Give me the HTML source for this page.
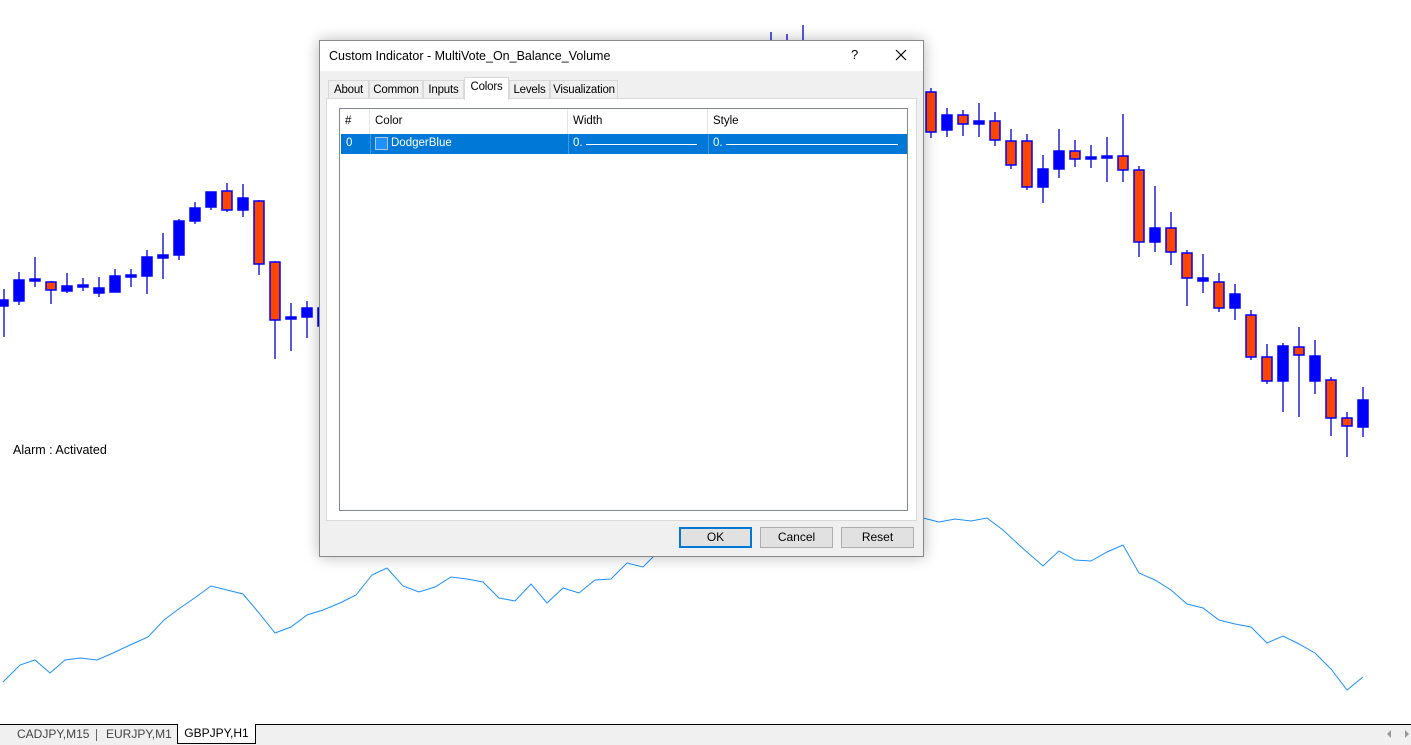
<!DOCTYPE html>
<html><head><meta charset="utf-8"><style>
*{margin:0;padding:0;box-sizing:border-box}
body{width:1411px;height:745px;overflow:hidden;background:#fff;font-family:"Liberation Sans",Arial,sans-serif;position:relative}
.abs{position:absolute}
#dlg{left:319px;top:40px;width:605px;height:517px;background:#f0f0f0;border:1px solid #888;box-shadow:0 0 14px rgba(0,0,0,.28)}
#title{position:absolute;left:0;top:0;width:603px;height:30px;background:#fff;font-size:12.5px;color:#000}
.tab{position:absolute;top:39px;height:19px;border:1px solid #d9d9d9;border-bottom:none;background:#f0f0f0;font-size:11.5px;line-height:18px;text-align:center;color:#000;white-space:nowrap;letter-spacing:-0.2px}
.tab.act{top:36px;height:23px;background:#fff;border-color:#d9d9d9;z-index:2}
#panel{position:absolute;left:6px;top:57px;width:591px;height:423px;background:#fff;border:1px solid #d9d9d9}
#list{position:absolute;left:12px;top:9px;width:569px;height:403px;border:1px solid #828790;background:#fff;font-size:11.5px}
.hd{position:absolute;top:0;height:25px;line-height:24px;border-right:1px solid #e5e5e5;padding-left:5px}
.btn{position:absolute;top:486px;height:21px;border:1px solid #adadad;background:#e1e1e1;font-size:12px;line-height:19px;text-align:center}
.bt{position:absolute;top:727px;font-size:12px;color:#444}
</style></head><body>
<svg class="abs" style="left:0;top:0" width="1411" height="745">
<g stroke="#0000cc" stroke-width="1.3">
<line x1="4" y1="289" x2="4" y2="337"/><line x1="19" y1="272" x2="19" y2="305"/><line x1="35" y1="257" x2="35" y2="287"/><line x1="51" y1="281" x2="51" y2="304"/><line x1="67" y1="273" x2="67" y2="293"/><line x1="83" y1="278" x2="83" y2="291"/><line x1="99" y1="277" x2="99" y2="297"/><line x1="115" y1="269" x2="115" y2="292"/><line x1="131" y1="269" x2="131" y2="287"/><line x1="147" y1="250" x2="147" y2="294"/><line x1="163" y1="233" x2="163" y2="279"/><line x1="179" y1="219" x2="179" y2="260"/><line x1="195" y1="202" x2="195" y2="224"/><line x1="211" y1="192" x2="211" y2="210"/><line x1="227" y1="183" x2="227" y2="212"/><line x1="243" y1="184" x2="243" y2="217"/><line x1="259" y1="200" x2="259" y2="275"/><line x1="275" y1="261" x2="275" y2="359"/><line x1="291" y1="303" x2="291" y2="351"/><line x1="307" y1="301" x2="307" y2="338"/><line x1="323" y1="300" x2="323" y2="340"/>
<line x1="771" y1="32" x2="771" y2="42"/><line x1="787" y1="34" x2="787" y2="42"/><line x1="803" y1="25" x2="803" y2="42"/>
<line x1="931" y1="88" x2="931" y2="138"/><line x1="947" y1="108" x2="947" y2="137"/><line x1="963" y1="110" x2="963" y2="136"/><line x1="979" y1="103" x2="979" y2="137"/><line x1="995" y1="112" x2="995" y2="146"/><line x1="1011" y1="129" x2="1011" y2="169"/><line x1="1027" y1="134" x2="1027" y2="190"/><line x1="1043" y1="155" x2="1043" y2="203"/><line x1="1059" y1="129" x2="1059" y2="178"/><line x1="1075" y1="140" x2="1075" y2="167"/><line x1="1091" y1="145" x2="1091" y2="168"/><line x1="1107" y1="137" x2="1107" y2="182"/><line x1="1123" y1="114" x2="1123" y2="182"/><line x1="1139" y1="166" x2="1139" y2="257"/><line x1="1155" y1="186" x2="1155" y2="252"/><line x1="1171" y1="212" x2="1171" y2="265"/><line x1="1187" y1="250" x2="1187" y2="306"/><line x1="1203" y1="254" x2="1203" y2="293"/><line x1="1219" y1="273" x2="1219" y2="312"/><line x1="1235" y1="284" x2="1235" y2="320"/><line x1="1251" y1="310" x2="1251" y2="360"/><line x1="1267" y1="344" x2="1267" y2="384"/><line x1="1283" y1="343" x2="1283" y2="412"/><line x1="1299" y1="327" x2="1299" y2="417"/><line x1="1315" y1="340" x2="1315" y2="394"/><line x1="1331" y1="377" x2="1331" y2="436"/><line x1="1347" y1="412" x2="1347" y2="457"/><line x1="1363" y1="387" x2="1363" y2="437"/>
</g>
<g stroke="#0000ff" stroke-width="1.5" fill="#0000ff">
<rect x="-1" y="300" width="9" height="6"/><rect x="14" y="280" width="10" height="21"/><rect x="30" y="279" width="10" height="2"/><rect x="62" y="286" width="10" height="5"/><rect x="78" y="285" width="10" height="2"/><rect x="94" y="288" width="10" height="5"/><rect x="110" y="276" width="10" height="16"/><rect x="126" y="275" width="10" height="2"/><rect x="142" y="257" width="10" height="19"/><rect x="158" y="255" width="10" height="3"/><rect x="174" y="221" width="10" height="34"/><rect x="190" y="208" width="10" height="13"/><rect x="206" y="192" width="10" height="15"/><rect x="238" y="198" width="10" height="12"/><rect x="286" y="317" width="10" height="2"/><rect x="302" y="308" width="10" height="9"/><rect x="318" y="308" width="10" height="18"/>
<rect x="942" y="115" width="10" height="15"/><rect x="974" y="121" width="10" height="3"/><rect x="1038" y="169" width="10" height="18"/><rect x="1054" y="151" width="10" height="18"/><rect x="1086" y="157" width="10" height="2"/><rect x="1102" y="156" width="10" height="2"/><rect x="1150" y="228" width="10" height="14"/><rect x="1198" y="278" width="10" height="3"/><rect x="1230" y="294" width="10" height="14"/><rect x="1278" y="346" width="10" height="35"/><rect x="1310" y="356" width="10" height="25"/><rect x="1358" y="400" width="10" height="27"/>
</g>
<g stroke="#0000ff" stroke-width="1.5" fill="#ff4500">
<rect x="46" y="282" width="10" height="8"/><rect x="222" y="191" width="10" height="19"/><rect x="254" y="201" width="10" height="63"/><rect x="270" y="262" width="10" height="58"/>
<rect x="926" y="92" width="10" height="40"/><rect x="958" y="115" width="10" height="9"/><rect x="990" y="121" width="10" height="19"/><rect x="1006" y="141" width="10" height="24"/><rect x="1022" y="141" width="10" height="46"/><rect x="1070" y="151" width="10" height="8"/><rect x="1118" y="156" width="10" height="14"/><rect x="1134" y="170" width="10" height="72"/><rect x="1166" y="228" width="10" height="24"/><rect x="1182" y="253" width="10" height="25"/><rect x="1214" y="282" width="10" height="26"/><rect x="1246" y="315" width="10" height="42"/><rect x="1262" y="357" width="10" height="24"/><rect x="1294" y="347" width="10" height="8"/><rect x="1326" y="380" width="10" height="38"/><rect x="1342" y="418" width="10" height="8"/>
</g>
<polyline fill="none" stroke="#1e90ff" stroke-width="1" points="3,682 20,665 35,660 50,673 65,660 80,658 97,660 113,653 130,645 148,637 164,620 180,608 196,597 211,586 227,590 243,594 259,613 275,633 291,627 307,615 323,610 340,603 356,595 372,575 387,568 403,586 419,592 435,587 451,577 467,579 483,582 499,598 515,601 531,584 547,603 563,588 579,593 595,580 611,579 627,563 643,567 660,550"/>
<polyline fill="none" stroke="#1e90ff" stroke-width="1" points="915,515 923,518 939,522 955,519 971,521 987,518 1003,530 1019,545 1043,566 1059,551 1075,560 1091,561 1107,552 1123,545 1139,573 1155,580 1171,590 1187,604 1203,608 1219,620 1235,624 1251,627 1267,643 1283,636 1299,644 1315,653 1331,669 1347,690 1363,677"/>
</svg>
<div class="abs" style="left:13px;top:443px;font-size:12.5px">Alarm : Activated</div>

<div id="dlg" class="abs">
 <div id="title"><span style="position:absolute;left:9px;top:8px">Custom Indicator - MultiVote_On_Balance_Volume</span>
 <span style="position:absolute;left:531px;top:6px;font-size:13px">?</span>
 <svg style="position:absolute;left:575px;top:8px" width="12" height="12"><path d="M1 1L11 11M11 1L1 11" stroke="#000" stroke-width="1.2"/></svg></div>
 <div class="tab" style="left:8px;width:41px">About</div>
 <div class="tab" style="left:49px;width:54px">Common</div>
 <div class="tab" style="left:103px;width:41px">Inputs</div>
 <div class="tab act" style="left:144px;width:45px">Colors</div>
 <div class="tab" style="left:189px;width:41px">Levels</div>
 <div class="tab" style="left:230px;width:68px">Visualization</div>
 <div id="panel"><div id="list">
  <div class="hd" style="left:0;width:30px">#</div>
  <div class="hd" style="left:30px;width:198px">Color</div>
  <div class="hd" style="left:228px;width:140px">Width</div>
  <div class="hd" style="left:368px;width:199px;border-right:none">Style</div>
  <div style="position:absolute;left:1px;top:25px;width:566px;height:20px;background:#0078d7;color:#fff;line-height:19px">
   <span style="position:absolute;left:5px">0</span>
   <span style="position:absolute;left:29px;top:0;width:1px;height:20px;background:#3d9ae2"></span>
   <span style="position:absolute;left:34px;top:3px;width:13px;height:13px;background:#1e90ff;border:1px solid #b0c8e8"></span>
   <span style="position:absolute;left:50px">DodgerBlue</span>
   <span style="position:absolute;left:227px;top:0;width:1px;height:20px;background:#3d9ae2"></span>
   <span style="position:absolute;left:232px">0.</span><span style="position:absolute;left:245px;top:10px;width:111px;height:1px;background:#fff"></span>
   <span style="position:absolute;left:367px;top:0;width:1px;height:20px;background:#3d9ae2"></span>
   <span style="position:absolute;left:372px">0.</span><span style="position:absolute;left:385px;top:10px;width:172px;height:1px;background:#fff"></span>
  </div>
 </div></div>
 <div class="btn" style="left:359px;width:73px;border:2px solid #0078d7;line-height:17px">OK</div>
 <div class="btn" style="left:440px;width:73px">Cancel</div>
 <div class="btn" style="left:521px;width:73px">Reset</div>
</div>

<div class="abs" style="left:0;top:724px;width:1411px;height:21px;background:#f0f0f0;border-top:1px solid #000"></div>
<div class="bt" style="left:17px">CADJPY,M15</div>
<div class="abs" style="left:96px;top:729px;width:1px;height:12px;background:#666"></div>
<div class="bt" style="left:106px">EURJPY,M1</div>
<div class="abs" style="left:177px;top:724px;width:79px;height:20px;background:#fff;border:1px solid #000;border-top:none;font-size:12px;line-height:19px;text-align:center">GBPJPY,H1</div>
<div class="abs" style="left:1387px;top:730px;width:0;height:0;border:4px solid transparent;border-right:4px solid #999;border-left:none"></div>
<div class="abs" style="left:1405px;top:730px;width:0;height:0;border:4px solid transparent;border-left:4px solid #999;border-right:none"></div>
</body></html>
